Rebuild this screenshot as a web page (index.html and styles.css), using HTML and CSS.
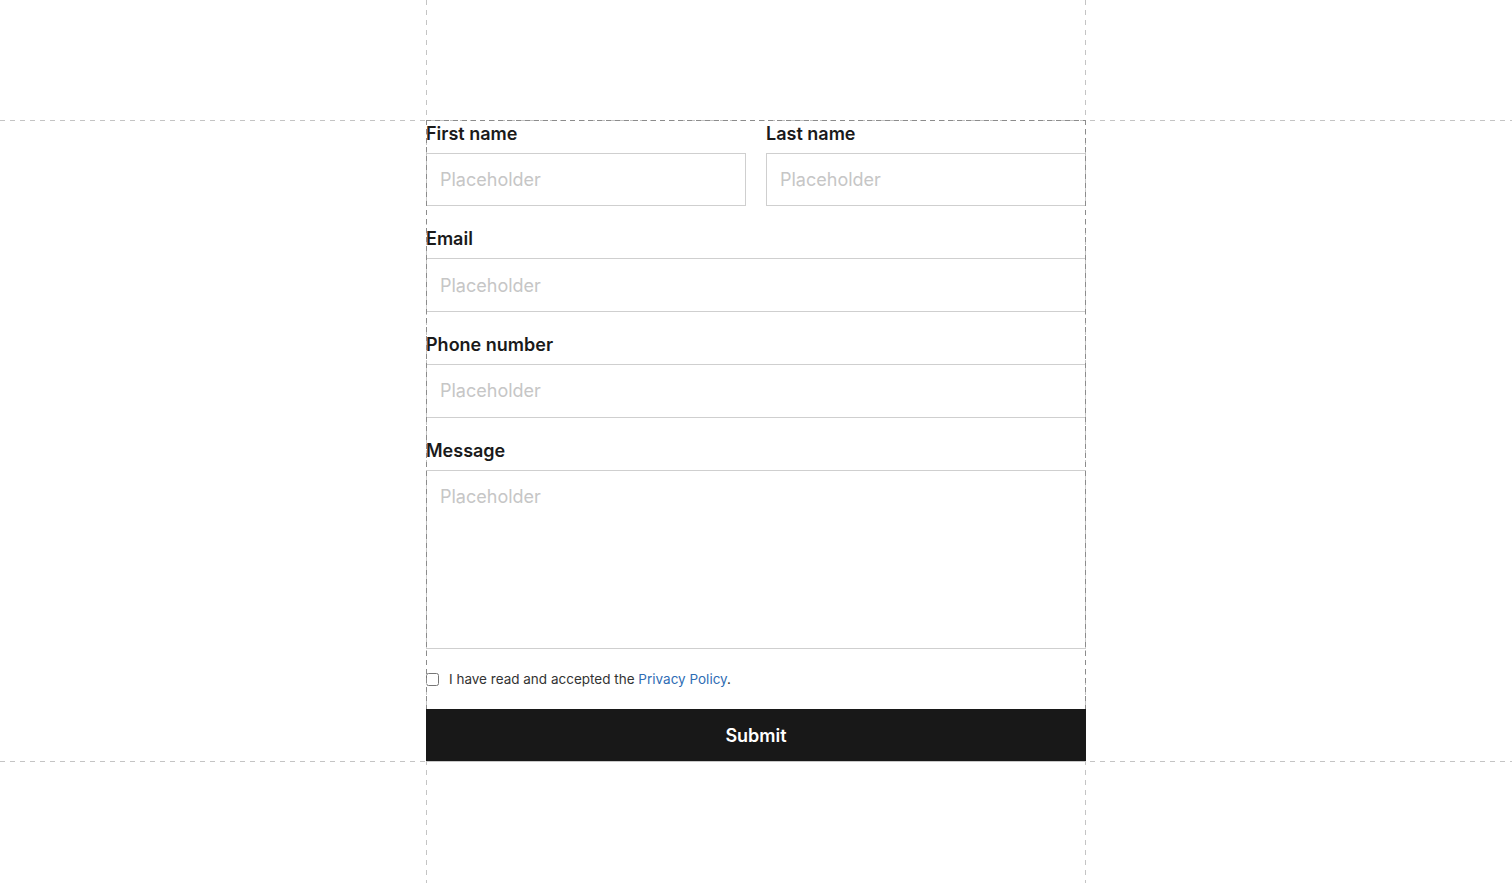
FILE: index.html
```html
<!DOCTYPE html>
<html lang="en">
<head>
    <meta charset="UTF-8">
    <title>Contact Form</title>
    <link rel="stylesheet" href="styles.css">
</head>
<body>
    <div class="guide guide-top"></div>
    <div class="guide guide-bottom"></div>
    <div class="guide guide-left"></div>
    <div class="guide guide-right"></div>

    <form class="contact-form">
        <div class="row">
            <div class="field">
                <label for="first">First name</label>
                <input id="first" type="text" placeholder="Placeholder">
            </div>
            <div class="field">
                <label for="last">Last name</label>
                <input id="last" type="text" placeholder="Placeholder">
            </div>
        </div>
        <div class="field">
            <label for="email">Email</label>
            <input id="email" type="email" placeholder="Placeholder">
        </div>
        <div class="field">
            <label for="phone">Phone number</label>
            <input id="phone" type="tel" placeholder="Placeholder">
        </div>
        <div class="field">
            <label for="message">Message</label>
            <textarea id="message" placeholder="Placeholder"></textarea>
        </div>
        <label class="consent">
            <input type="checkbox">
            <span>I have read and accepted the <a href="#">Privacy Policy</a>.</span>
        </label>
        <button type="button" class="submit">Submit</button>
    </form>
    <div class="frame"></div>
</body>
</html>
```

FILE: styles.css
```css
html, body{
    margin: 0;
    padding: 0;
    width: 100%;
    height: 100%;
}
body{
    display: flex;
    justify-content: center;
    align-items: center;
    font-family: Inter, "Noto Sans", sans-serif;
    background: #ffffff;
    color: #1a1a1a;
}

/* layout guides drawn over the page */
.guide{
    position: fixed;
    pointer-events: none;
}
.guide-top, .guide-bottom{
    left: 0;
    right: 0;
    height: 1px;
    background: repeating-linear-gradient(90deg, #c4c4c4 0 5px, transparent 5px 10px);
}
.guide-top{ top: 120px; }
.guide-bottom{ top: 761px; }
.guide-left, .guide-right{
    top: 0;
    bottom: 0;
    width: 1px;
    background: repeating-linear-gradient(180deg, #c4c4c4 0 5px, transparent 5px 10px);
}
.guide-left{ left: 426px; }
.guide-right{ left: 1085px; }

/* darker outline on the form box itself */
.frame{
    position: fixed;
    left: 426px;
    top: 120px;
    width: 660px;
    height: 589px;
    pointer-events: none;
    background:
        repeating-linear-gradient(90deg, #8c8c8c 0 5px, transparent 5px 9px) top left / 100% 1px no-repeat,
        repeating-linear-gradient(180deg, #8c8c8c 0 5px, transparent 5px 9px) top left / 1px 100% no-repeat,
        repeating-linear-gradient(180deg, #8c8c8c 0 5px, transparent 5px 9px) top right / 1px 100% no-repeat;
}

.contact-form{
    width: 660px;
    display: flex;
    flex-direction: column;
}

.row{
    display: flex;
    gap: 20px;

    .field{
        flex: 1;
    }
}

.field{
    display: flex;
    flex-direction: column;
    margin-bottom: 20px;

    label{
        font-size: 18px;
        font-weight: 600;
        line-height: 26px;
        margin-bottom: 6px;
        color: #1a1a1a;
    }

    input, textarea{
        font-family: inherit;
        font-size: 18px;
        height: 53.67px;
        box-sizing: border-box;
        border: 1px solid #cfcfcf;
        border-radius: 0;
        padding: 0 13px;
        margin: 0;
        color: #1a1a1a;
        outline: none;
    }

    textarea{
        height: 179.5px;
        padding-top: 15px;
        resize: none;
    }

    input::placeholder, textarea::placeholder{
        color: #c6c6c6;
    }
}

.field:nth-last-of-type(1){
    margin-bottom: 0;
}

.consent{
    display: flex;
    align-items: center;
    height: 20px;
    margin: 20px 0;
    font-size: 13.5px;
    color: #333333;

    input{
        width: 13px;
        height: 13px;
        margin: 0 10px 0 0;
    }

    a{
        color: #2f6db5;
        text-decoration: none;
    }
}

/* sits above the guide lines */
.submit{
    position: relative;
    z-index: 2;
    height: 53px;
    border: none;
    border-bottom: 1px solid #c8c8c8;
    background: #181818;
    color: #ffffff;
    font-family: inherit;
    font-size: 18px;
    font-weight: 600;
    cursor: pointer;
}
```
